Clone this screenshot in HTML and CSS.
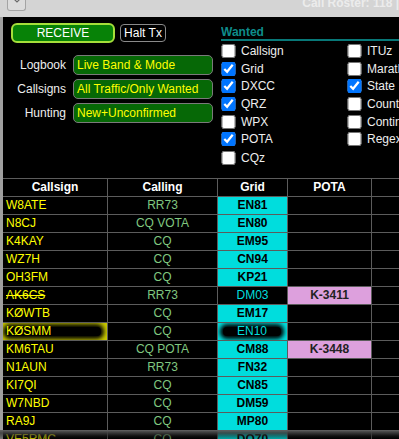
FILE: index.html
```html
<!DOCTYPE html>
<html lang="en">
<head>
    <meta charset="UTF-8">
    <meta name="viewport" content="width=device-width, initial-scale=1.0">
    <title>Call Roster</title>
    <link rel="stylesheet" href="styles.css">
</head>
<body>
    <div class="titlebar">
        <div class="menu-btn">
            <svg width="8" height="4" viewBox="0 0 8 4"><path d="M0 -2 L4 2 L8 -2" fill="none" stroke="#6a6a6a" stroke-width="1.2"/></svg>
        </div>
        <div class="title">Call Roster: 118 |</div>
    </div>
    <div class="window">
        <div class="top">
            <div class="controls">
                <div class="buttons">
                    <button class="receive">RECEIVE</button>
                    <button class="halt">Halt Tx</button>
                </div>
                <div class="filters">
                    <label>Logbook</label>
                    <div class="field">Live Band &amp; Mode</div>
                    <label>Callsigns</label>
                    <div class="field">All Traffic/Only Wanted</div>
                    <label>Hunting</label>
                    <div class="field">New+Unconfirmed</div>
                </div>
            </div>
            <div class="wanted">
                <div class="wanted-title">Wanted</div>
                <div class="wanted-cols">
                    <div class="wanted-col">
                        <label class="check"><input type="checkbox"> Callsign</label>
                        <label class="check"><input type="checkbox" checked> Grid</label>
                        <label class="check"><input type="checkbox" checked> DXCC</label>
                        <label class="check"><input type="checkbox" checked> QRZ</label>
                        <label class="check"><input type="checkbox"> WPX</label>
                        <label class="check"><input type="checkbox" checked> POTA</label>
                        <label class="check cqz"><input type="checkbox"> CQz</label>
                    </div>
                    <div class="wanted-col">
                        <label class="check"><input type="checkbox"> ITUz</label>
                        <label class="check"><input type="checkbox"> Marathon</label>
                        <label class="check"><input type="checkbox" checked> State</label>
                        <label class="check"><input type="checkbox"> Country</label>
                        <label class="check"><input type="checkbox"> Continent</label>
                        <label class="check"><input type="checkbox"> Regex</label>
                    </div>
                </div>
            </div>
        </div>
        <div class="roster" id="roster">
            <div class="row head">
                <div>Callsign</div>
                <div>Calling</div>
                <div>Grid</div>
                <div>POTA</div>
                <div></div>
            </div>
        </div>
    </div>
    <div class="scroll-shadow"></div>
    <script>
        // call, calling, grid, pota, flags
        const stations = [
            ['W8ATE', 'RR73', 'EN81', '', ''],
            ['N8CJ', 'CQ VOTA', 'EN80', '', ''],
            ['K4KAY', 'CQ', 'EM95', '', ''],
            ['WZ7H', 'CQ', 'CN94', '', ''],
            ['OH3FM', 'CQ', 'KP21', '', ''],
            ['AK6CS', 'RR73', 'DM03', 'K-3411', 'worked'],
            ['KØWTB', 'CQ', 'EM17', '', ''],
            ['KØSMM', 'CQ', 'EN10', '', 'selected'],
            ['KM6TAU', 'CQ POTA', 'CM88', 'K-3448', ''],
            ['N1AUN', 'RR73', 'FN32', '', ''],
            ['KI7QI', 'CQ', 'CN85', '', ''],
            ['W7NBD', 'CQ', 'DM59', '', ''],
            ['RA9J', 'CQ', 'MP80', '', ''],
            ['VE5RMC', 'CQ', 'DO70', '', '']
        ];

        function cell(cls, text, glow) {
            const el = document.createElement('div');
            el.className = cls;
            if (glow) {
                const blob = document.createElement('span');
                blob.className = 'blob';
                blob.textContent = text;
                el.appendChild(blob);
                el.classList.add('glow');
            } else {
                el.textContent = text;
            }
            return el;
        }

        function buildRoster() {
            const rosterEl = document.getElementById('roster');
            stations.forEach(s => {
                const [call, calling, grid, pota, flag] = s;
                const row = document.createElement('div');
                row.className = 'row';
                const selected = flag === 'selected';
                const worked = flag === 'worked';

                row.appendChild(cell('call' + (worked ? ' worked' : ''), call, selected));
                row.appendChild(cell('calling', calling));
                row.appendChild(cell('grid' + (worked ? '' : ' new-grid'), grid, selected));
                row.appendChild(cell('pota' + (pota ? ' spotted' : ''), pota));
                row.appendChild(cell('extra', ''));
                rosterEl.appendChild(row);
            });
        }

        document.addEventListener('DOMContentLoaded', buildRoster);
    </script>
</body>
</html>
```

FILE: styles.css
```css
body {
    margin: 0;
    background: #000;
    font-family: "Liberation Sans", Arial, sans-serif;
    font-size: 12px;
    width: 399px;
    height: 439px;
    overflow: hidden;
    position: relative;
}
.titlebar {
    height: 17px;
    background: #d4d4d4;
    display: flex;
    white-space: nowrap;
    overflow: hidden;
}
.menu-btn {
    margin-left: 7px;
    width: 19px;
    height: 10px;
    border: 1px solid #a4a4a4;
    border-top: none;
    border-radius: 0 0 3px 3px;
    background: #dcdcdc;
    display: flex;
    justify-content: center;
}
.title {
    margin-left: 276px;
    margin-top: -4px;
    line-height: 14px;
    font-weight: bold;
    color: #ececec;
}
.window {
    border-left: 3px solid #a0a0a0;
    height: 422px;
    overflow: hidden;
}
.top {
    display: flex;
    height: 161px;
}
.controls {
    width: 210px;
    flex-shrink: 0;
}
.buttons {
    display: flex;
    align-items: center;
    gap: 5px;
    margin: 6px 0 0 8px;
}
.buttons button {
    font-family: "Liberation Sans", Arial, sans-serif;
    font-size: 12px;
    color: #fff;
    padding: 0;
}
.receive {
    width: 104px;
    height: 20px;
    border: 2px solid #a5df3a;
    border-radius: 6px;
    background: #078207;
}
.halt {
    width: 46px;
    height: 18px;
    border: 1px solid #8a8a8a;
    border-radius: 4px;
    background: #000;
}
.filters {
    display: grid;
    grid-template-columns: 63px 140px;
    column-gap: 7px;
    row-gap: 4px;
    margin-top: 12px;
}
.filters label {
    text-align: right;
    line-height: 20px;
    color: #eee;
}
.field {
    height: 18px;
    line-height: 18px;
    border: 1px solid #7a7a7a;
    border-radius: 5px;
    background: #066806;
    color: #ff0;
    padding-left: 3px;
    white-space: nowrap;
}
.wanted {
    margin-left: 8px;
    flex: 1;
    overflow: hidden;
    padding-top: 8px;
}
.wanted-title {
    font-weight: bold;
    color: #0e8c8c;
    line-height: 14px;
    border-bottom: 2px solid #087878;
}
.wanted-cols {
    display: flex;
    margin-top: 1px;
}
.wanted-col {
    width: 126px;
    flex-shrink: 0;
}
.check {
    display: flex;
    align-items: center;
    gap: 5px;
    height: 17.7px;
    color: #eee;
    white-space: nowrap;
}
.check input {
    margin: 0;
    width: 15px;
    height: 14px;
}
.check.cqz {
    margin-top: 1px;
}
.roster {
    border-top: 1px solid #5c5c5c;
}
.row {
    display: grid;
    grid-template-columns: 105px 110px 70px 84px 40px;
    height: 18px;
}
.row > div {
    border-right: 1px solid #5c5c5c;
    border-bottom: 1px solid #5c5c5c;
    line-height: 17px;
    text-align: center;
    overflow: hidden;
    white-space: nowrap;
}
.head > div {
    color: #fff;
    font-weight: bold;
}
.row > .call {
    text-align: left;
    padding-left: 3px;
    color: #ff0;
}
.worked {
    text-decoration: line-through;
}
.calling {
    color: #80c880;
}
.grid {
    color: #00dddd;
}
.new-grid {
    background: #00dddd;
    color: #000;
    font-weight: bold;
}
.pota.spotted {
    background: #dda0dd;
    color: #222;
    font-weight: bold;
}
.row > .glow {
    padding: 4px 6px 4px 5px;
}
.row > .call.glow {
    padding-left: 3px;
    background: #c8c800;
}
.grid.glow {
    font-weight: normal;
    color: #00dddd;
}
.blob {
    display: block;
    line-height: 9px;
    background: #000;
    border-radius: 4px;
    box-shadow: 0 0 4px 3px #000;
}
.scroll-shadow {
    position: absolute;
    left: 0;
    right: 0;
    top: 430px;
    height: 9px;
    background: linear-gradient(rgba(98, 98, 98, 0.97) 0, rgba(60, 60, 60, 0.9) 3px, rgba(30, 30, 30, 0.55) 6px, rgba(0, 0, 0, 0.25) 9px);
}
```
